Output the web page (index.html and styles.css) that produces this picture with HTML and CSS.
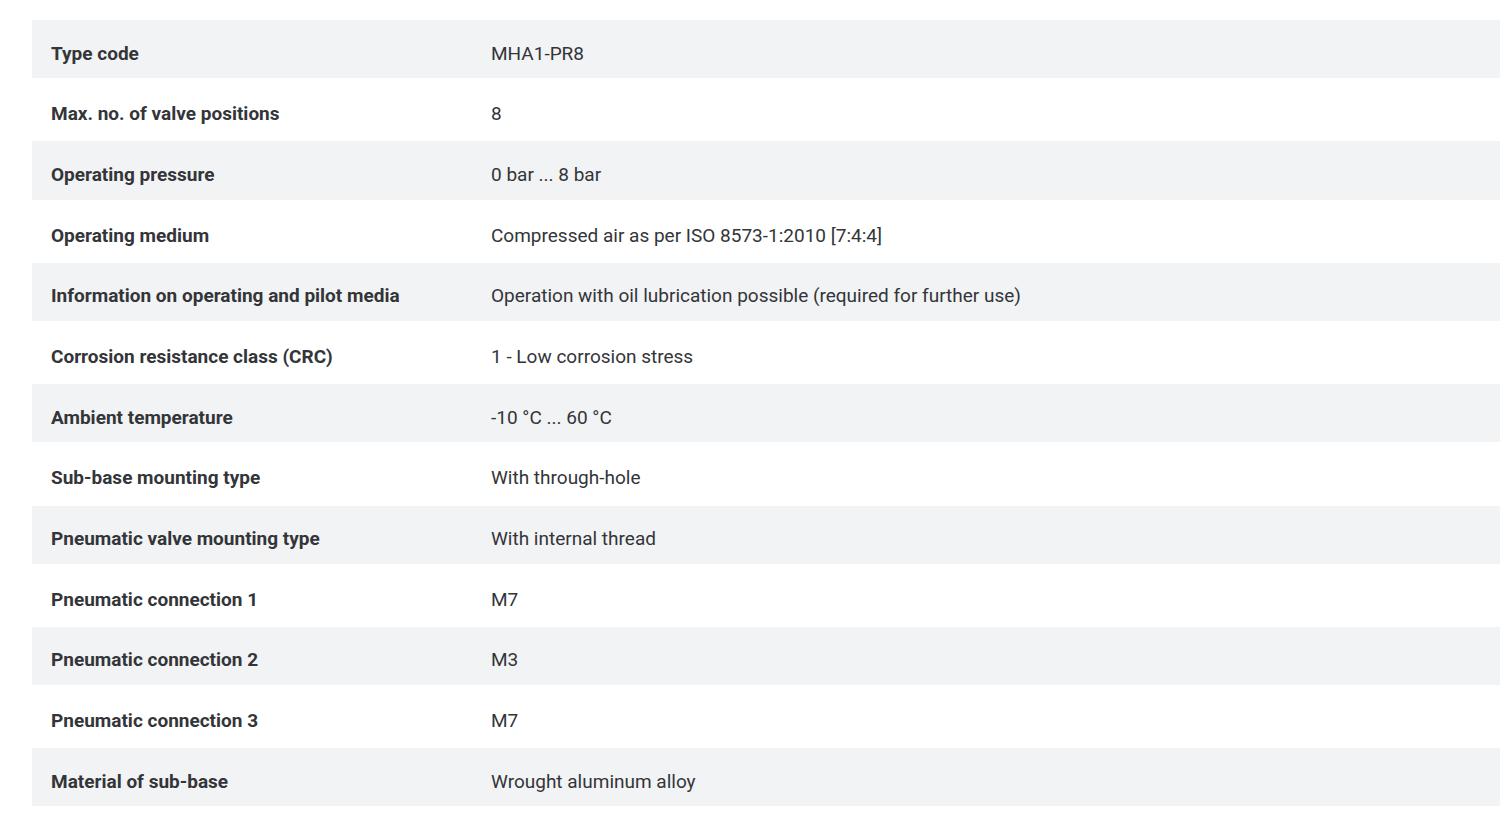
FILE: index.html
```html
<!DOCTYPE html>
<html lang="en">
<head>
<meta charset="utf-8">
<title>Technical data</title>
<link rel="stylesheet" href="styles.css">
</head>
<body>
<div class="spec">
  <div class="row"><div class="label">Type code</div><div class="value">MHA1-PR8</div></div>
  <div class="row"><div class="label">Max. no. of valve positions</div><div class="value">8</div></div>
  <div class="row"><div class="label">Operating pressure</div><div class="value">0 bar ... 8 bar</div></div>
  <div class="row"><div class="label">Operating medium</div><div class="value">Compressed air as per ISO 8573-1:2010 [7:4:4]</div></div>
  <div class="row"><div class="label">Information on operating and pilot media</div><div class="value">Operation with oil lubrication possible (required for further use)</div></div>
  <div class="row"><div class="label">Corrosion resistance class (CRC)</div><div class="value">1 - Low corrosion stress</div></div>
  <div class="row"><div class="label">Ambient temperature</div><div class="value">-10 °C ... 60 °C</div></div>
  <div class="row"><div class="label">Sub-base mounting type</div><div class="value">With through-hole</div></div>
  <div class="row"><div class="label">Pneumatic valve mounting type</div><div class="value">With internal thread</div></div>
  <div class="row"><div class="label">Pneumatic connection 1</div><div class="value">M7</div></div>
  <div class="row"><div class="label">Pneumatic connection 2</div><div class="value">M3</div></div>
  <div class="row"><div class="label">Pneumatic connection 3</div><div class="value">M7</div></div>
  <div class="row"><div class="label">Material of sub-base</div><div class="value">Wrought aluminum alloy</div></div>
</div>
</body>
</html>
```
FILE: styles.css
```css
html, body {
  margin: 0;
  padding: 0;
  background: #ffffff;
}
body {
  font-family: Roboto, "Liberation Sans", sans-serif;
  color: #333539;
  font-size: 19px;
}
.spec {
  display: flex;
  flex-direction: column;
  margin: 20px 0 0 32px;
  width: 1468px;
}
.row {
  display: flex;
  align-items: center;
  height: 63.2px;
  padding-top: 8px;
  box-sizing: border-box;
}
.row:nth-child(odd) {
  background: #f2f3f5;
  height: 58.2px;
}
.label {
  width: 440px;
  padding-left: 19px;
  box-sizing: border-box;
  font-weight: 700;
  flex: none;
}
.value {
  padding-left: 19px;
}
```
